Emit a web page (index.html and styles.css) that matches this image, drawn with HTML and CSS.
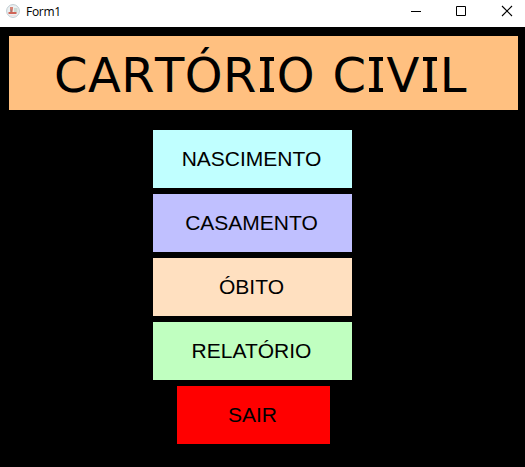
FILE: index.html
```html
<!DOCTYPE html>
<html lang="pt-BR">
<head>
<meta charset="utf-8">
<title>Form1</title>
<link rel="stylesheet" href="styles.css">
</head>
<body>
<header class="titlebar">
  <svg class="app-icon" width="14" height="14" viewBox="0 0 14 14">
    <circle cx="7" cy="7" r="6.4" fill="#edf1f2" stroke="#bfcbd1" stroke-width="1"/>
    <path d="M8 4h3.500v4.500H8z" fill="#cddbd5"/>
    <path d="M4 3h3v2L6.500 8H4.700L4 5z" fill="#d78376"/>
    <path d="M2.500 8h8v2h-8z" fill="#cf6558"/>
    <path d="M4.500 5.500h1V8h-1z" fill="#856b68"/>
    <path d="M4 11h6v1H4z" fill="#f5dddd"/>
  </svg>
  <span class="caption">Form1</span>
  <div class="controls">
    <svg width="46" height="27" viewBox="0 0 46 27" shape-rendering="crispEdges"><path d="M16 11h10v1H16z"/></svg>
    <svg width="46" height="27" viewBox="0 0 46 27"><path d="M16.500 6.500h9v9h-9z" fill="none" stroke="#000"/></svg>
    <svg width="46" height="27" viewBox="0 0 46 27"><path d="M16 6l10 10M26 6L16 16" fill="none" stroke="#000" stroke-width="1.100"/></svg>
  </div>
</header>
<main class="form">
  <h1 class="banner">CARTÓR<span class="slab">I</span>O C<span class="slab">I</span>V<span class="slab">I</span>L</h1>
  <nav class="menu">
    <button class="item birth">NASCIMENTO</button>
    <button class="item marriage">CASAMENTO</button>
    <button class="item death">ÓBITO</button>
    <button class="item report">RELATÓRIO</button>
    <button class="item exit">SAIR</button>
  </nav>
</main>
</body>
</html>
```
FILE: styles.css
```css
* { box-sizing: border-box; }
body {
  margin: 0;
  height: 467px;
  background: #000;
  overflow: hidden;
}
.titlebar {
  display: flex;
  height: 27px;
  background: #fff;
  padding-left: 6px;
}
.app-icon { margin-top: 4px; }
.caption {
  margin-left: 6px;
  font: 12px/23px "Open Sans", "Noto Sans", sans-serif;
  letter-spacing: -0.3px;
  color: #000;
}
.controls {
  display: flex;
  margin-left: auto;
  margin-right: -7px;
}
.controls svg { flex: none; }
.controls svg:nth-child(2) { margin-left: -1px; }
.form { padding: 9px 7px 0 9px; }
.banner {
  margin: 0;
  height: 74px;
  padding: 2px 0 0 45px;
  background: #ffc080;
  color: #000;
  font: 400 48px/74px "DejaVu Sans", Verdana, sans-serif;
  font-kerning: none;
  letter-spacing: 0.45px;
  word-spacing: 1.6px;
  white-space: nowrap;
}
/* Capital I with slab terminals */
.slab {
  display: inline-block;
  position: relative;
  width: 20px;
  line-height: 1;
  letter-spacing: 0;
  text-align: center;
}
.slab::before,
.slab::after {
  content: "";
  position: absolute;
  left: 3px;
  width: 14px;
  height: 4px;
  background: #000;
}
.slab::before { top: 6px; }
.slab::after { top: 37px; }
.menu {
  display: flex;
  flex-direction: column;
  align-items: center;
  gap: 6px;
  width: 199px;
  margin: 20px 0 0 144px;
}
.item {
  width: 199px;
  height: 58px;
  padding: 0 2px 0 0;
  border: 0;
  color: #000;
  font: 21px/58px "Liberation Sans", Arial, sans-serif;
}
.birth { background: #c0ffff; }
.marriage { background: #c0c0ff; }
.death { background: #ffe0c0; }
.report { background: #c0ffc0; }
.exit { width: 153px; margin-left: 2px; background: #f00; }
```
